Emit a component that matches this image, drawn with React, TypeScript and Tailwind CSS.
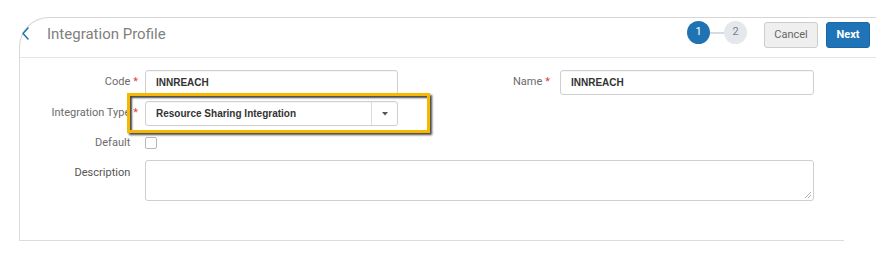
import React from "react";

const labelCls =
  "w-[118px] shrink-0 text-right text-[11px] text-[#6b6b6b] whitespace-nowrap";
const inputCls =
  "h-[25px] border border-[#cfcfcf] rounded-[3px] bg-white flex items-center pl-[10px] text-[10px] font-bold text-[#333] shadow-[inset_0_1px_1px_rgba(0,0,0,0.04)]";

function Star({ hidden }: { hidden?: boolean }) {
  return (
    <span className={`ml-[3px] ${hidden ? "invisible" : "text-[#e0443a]"}`}>*</span>
  );
}

export default function App() {
  return (
    <div
      className="w-[891px] h-[256px] bg-white pt-[17px] pl-[19px] overflow-hidden"
      style={{ fontFamily: "Roboto, 'Liberation Sans', sans-serif" }}
    >
      {/* Header */}
      <div className="relative w-[857px] h-[41px] border-t border-l border-[#d6d6d6] rounded-tl-[30px] border-b-0 flex items-start">
        <div className="absolute left-0 right-0 bottom-0 h-px bg-[#e6e6e6]" />
        <svg
          className="mt-[9px] ml-[1px]"
          width="9"
          height="13"
          viewBox="0 0 9 13"
          fill="none"
        >
          <polyline
            points="7,1 2,6.5 7,12"
            stroke="#1f78b8"
            strokeWidth="1.6"
            strokeLinecap="round"
            strokeLinejoin="round"
          />
        </svg>
        <div className="ml-[17px] mt-[6px] text-[15px] leading-[20px] text-[#808080]">
          Integration Profile
        </div>
        <div className="ml-auto mr-[6px] mt-[2px] flex items-start">
          <div className="flex items-center mt-[1px]">
            <div className="w-[23px] h-[23px] rounded-full bg-[#1f73b3] text-white text-[11px] flex items-center justify-center">
              1
            </div>
            <div className="w-[14px] h-[2px] bg-[#d5dbe1]" />
            <div className="w-[23px] h-[23px] rounded-full bg-[#e4e8ec] text-[#7d7d7d] text-[11px] flex items-center justify-center">
              2
            </div>
          </div>
          <div className="ml-[17px] mt-[2px] w-[54px] h-[26px] rounded-[3px] border border-[#cdcdcd] bg-[#efefef] text-[#666] text-[11px] flex items-center justify-center">
            Cancel
          </div>
          <div className="ml-[8px] mt-[2px] w-[44px] h-[26px] rounded-[3px] bg-[#1e74b7] border border-[#1a67a3] text-white text-[11px] font-bold flex items-center justify-center">
            Next
          </div>
        </div>
      </div>

      {/* Body */}
      <div className="w-[825px] h-[183px] border-l border-b border-[#dcdcdc] pt-[12px]">
        {/* Row 1 */}
        <div className="flex items-center">
          <div className={labelCls}>
            Code
            <Star />
          </div>
          <div
            className={`${inputCls} ml-[7px] w-[253px]`}
            style={{ fontFamily: "'Liberation Sans', Arial, sans-serif" }}
          >
            INNREACH
          </div>
          <div className="w-[152px] shrink-0 text-right text-[11px] text-[#6b6b6b]">
            Name
            <Star />
          </div>
          <div
            className={`${inputCls} ml-[10px] w-[254px]`}
            style={{ fontFamily: "'Liberation Sans', Arial, sans-serif" }}
          >
            INNREACH
          </div>
        </div>

        {/* Row 2 */}
        <div className="flex items-center mt-[6px]">
          <div className={labelCls}>
            Integration Type
            <Star />
          </div>
          <div className="relative ml-[7px]">
            <div
              className={`${inputCls} w-[253px] pr-0`}
              style={{ fontFamily: "'Liberation Sans', Arial, sans-serif" }}
            >
              <span className="flex-1">Resource Sharing Integration</span>
              <div className="w-[26px] h-full border-l border-[#dcdcdc] flex items-center justify-center">
                <svg width="6" height="4" viewBox="0 0 6 4">
                  <polygon points="0,0 6,0 3,3.5" fill="#555" />
                </svg>
              </div>
            </div>
            <div className="absolute left-[-18px] top-[-8px] w-[303px] h-[40px] border-[3px] border-[#f6b800] shadow-[2px_2px_2px_rgba(40,40,40,0.85),inset_2px_2px_2px_rgba(40,40,40,0.85)] pointer-events-none" />
          </div>
        </div>

        {/* Row 3 */}
        <div className="flex items-center h-[12px] mt-[11px]">
          <div className={labelCls}>
            Default
            <Star hidden />
          </div>
          <div className="ml-[7px] w-[12px] h-[12px] border border-[#b8b8b8] rounded-[2px] bg-white" />
        </div>

        {/* Row 4 */}
        <div className="flex items-start mt-[11px]">
          <div className={`${labelCls} pt-[5px] text-[#555]`}>
            Description
            <Star hidden />
          </div>
          <div className="relative ml-[7px] w-[669px] h-[41px] border border-[#cfcfcf] rounded-[3px] bg-white">
            <svg
              className="absolute right-[1px] bottom-[1px]"
              width="8"
              height="8"
              viewBox="0 0 8 8"
            >
              <line x1="7" y1="1" x2="1" y2="7" stroke="#999" strokeWidth="0.8" />
              <line x1="7" y1="4" x2="4" y2="7" stroke="#999" strokeWidth="0.8" />
            </svg>
          </div>
        </div>
      </div>
    </div>
  );
}
